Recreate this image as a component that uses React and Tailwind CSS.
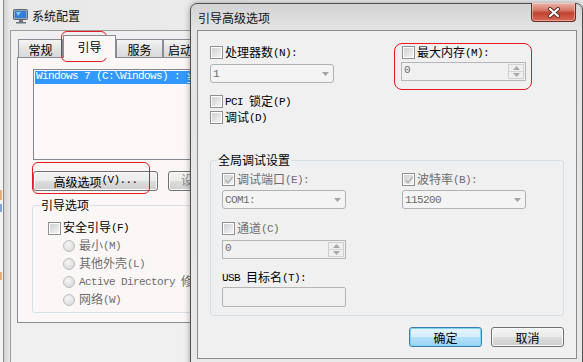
import React from "react";

function T({ s }) {
  const parts = s.match(/[\x00-\x7F]+|[^\x00-\x7F]+/g) || [];
  return (
    <>
      {parts.map((p, i) =>
        /^[\x00-\x7F]/.test(p) ? (
          <span key={i} className="relative top-[-1px] font-['Liberation_Mono',monospace] text-[11px] tracking-[-0.6px] whitespace-pre">
            {p}
          </span>
        ) : (
          <span key={i}>{p}</span>
        )
      )}
    </>
  );
}

function Check({ checked }) {
  return (
    <span className="relative flex h-[13px] w-[13px] shrink-0 items-center justify-center border border-[#8f8f8f] bg-white p-[1px]">
      <span className="h-full w-full bg-[linear-gradient(135deg,#cfd1d3,#f3f3f3)]" />
      {checked && (
        <svg className="absolute left-[1px] top-[1px]" width="10" height="10" viewBox="0 0 10 10">
          <path d="M1.5 5 L4 7.8 L8.7 1.8" fill="none" stroke="#b4b4b4" strokeWidth="1.6" />
        </svg>
      )}
    </span>
  );
}

function CheckRow({ label, checked, dim }) {
  return (
    <div className={"flex h-[13px] items-center gap-[2px] " + (dim ? "text-[#6d6d6d]" : "text-black")}>
      <Check checked={checked} />
      <span className="leading-[13px] whitespace-nowrap">
        <T s={label} />
      </span>
    </div>
  );
}

function Radio({ label }) {
  return (
    <div className="flex h-[18px] items-center gap-[4px] pl-[30px] text-[#6d6d6d]">
      <span className="h-[12px] w-[12px] shrink-0 rounded-full border border-[#bdbdbd] bg-[radial-gradient(circle_at_40%_35%,#f6f6f6,#d4d4d4)]" />
      <span className="whitespace-nowrap leading-[13px]">
        <T s={label} />
      </span>
    </div>
  );
}

function Arrow() {
  return (
    <svg width="7" height="4" viewBox="0 0 7 4">
      <path d="M0 0 H7 L3.5 4 Z" fill="#a3a3a3" />
    </svg>
  );
}

function Combo({ value }) {
  return (
    <div className="flex h-[19px] w-[124px] items-center justify-between rounded-[3px] border border-[#adb2b5] bg-[#f4f4f4] pl-[2px] pr-[4px] text-[#6d6d6d]">
      <span className="leading-[13px]">
        <T s={value} />
      </span>
      <Arrow />
    </div>
  );
}

function Spin({ value, wide }) {
  return (
    <div className={"flex h-[19px] border border-[#b3b7bb] bg-[#f0f0f0] " + (wide ? "w-[125px]" : "w-[124px]")}>
      <div className="flex flex-1 items-center pl-[2px] text-[#6d6d6d] leading-[13px]">
        <T s={value} />
      </div>
      <div className="my-[1px] mr-[1px] flex w-[16px] flex-col border border-[#d0d0d0] bg-[#efefef]">
        <div className="flex flex-1 items-center justify-center border-b border-[#d6d6d6]">
          <svg width="7" height="4" viewBox="0 0 7 4">
            <path d="M0 4 H7 L3.5 0 Z" fill="#a8a8a8" />
          </svg>
        </div>
        <div className="flex flex-1 items-center justify-center">
          <svg width="7" height="4" viewBox="0 0 7 4">
            <path d="M0 0 H7 L3.5 4 Z" fill="#a8a8a8" />
          </svg>
        </div>
      </div>
    </div>
  );
}

function Btn({ children, primary, w }) {
  return (
    <div
      className={
        "flex h-[20px] items-center justify-center rounded-[3px] border leading-[13px] text-black " +
        (primary
          ? "border-[#3c7fb1] bg-[linear-gradient(#e6f5fd_0%,#d4eefc_50%,#b4e2fb_50%,#9dd4f3_100%)] shadow-[inset_0_0_0_1px_#7fd3f7] "
          : "border-[#707070] bg-[linear-gradient(#f3f3f3_0%,#ebebeb_50%,#dddddd_50%,#cfcfcf_100%)] shadow-[inset_0_0_0_1px_#fbfbfb] ") +
        w
      }
    >
      {children}
    </div>
  );
}

function Tab({ label, w, selected, left }) {
  if (selected) {
    return (
      <div
        className={
          "relative z-10 -mb-[1px] flex h-[23px] items-center justify-center border border-b-0 border-[#898c95] bg-[#fcf7f7] pb-[1px] " + w
        }
      >
        {label}
      </div>
    );
  }
  return (
    <div
      className={
        "flex h-[18px] items-center border border-b-0 border-[#898c95] bg-[linear-gradient(#f4f4f4,#e4e4e4_50%,#d9d9d9)] pt-[1px] " +
        (left ? "justify-start pl-[4px] " : "justify-center ") +
        w
      }
    >
      {label}
    </div>
  );
}

export default function App() {
  return (
    <div className="relative h-[362px] w-[583px] overflow-hidden bg-[#ececec] font-['Noto_Sans_CJK_SC',sans-serif] text-[12px] leading-[13px] text-black">
      {/* desktop strip on the far left */}
      <div className="absolute left-0 top-0 flex h-full w-[4px] flex-col bg-[#f4f4f4]">
        <div className="mt-[190px] h-[10px] w-[2px] bg-[#e0b27a]" />
        <div className="mt-[4px] h-[8px] w-[2px] bg-[#7ea6dd]" />
        <div className="mt-[60px] h-[8px] w-[2px] bg-[#e0b27a]" />
      </div>

      {/* 系统配置 window */}
      <div className="absolute left-[3px] top-0 flex h-[370px] w-[260px] flex-col border-l border-[#8a8a8a] bg-[linear-gradient(90deg,#d2d2d2,#e8e8e8_6px,#ececec)]">
        <div className="flex h-[30px] shrink-0 items-center gap-[3px] pl-[9px] pt-[1px]">
          <svg width="16" height="16" viewBox="0 0 16 16">
            <rect x="0.5" y="1.5" width="14" height="10" rx="1" fill="#9aa3ad" stroke="#5d6770" />
            <rect x="2" y="3" width="11" height="7" fill="#2f7ed8" />
            <path d="M3 4 L8 4 L5 8 Z" fill="#8cc4f5" />
            <rect x="6" y="12" width="4" height="2" fill="#6b737b" />
            <rect x="3" y="14" width="10" height="1.5" fill="#6b737b" />
          </svg>
          <span className="text-[#111]">系统配置</span>
        </div>
        <div className="ml-[6px] flex-1 border-l border-t border-[#9c9c9c] bg-[#f0f0f0] pl-[6px] pt-[4px]">
          <div className="ml-[1px] flex h-[22px] items-end">
            <Tab label="常规" w="w-[45px]" />
            <Tab label="引导" w="w-[53px]" selected />
            <Tab label="服务" w="w-[47px]" />
            <Tab label="启动" w="w-[50px]" left />
          </div>
          <div className="h-[266px] w-[320px] border border-[#898c95] bg-[#fcf7f7] pl-[15px] pt-[11px]">
            <div className="h-[91px] w-[300px] border border-[#828790] bg-[#fdf8f8] pt-[1px] pl-[1px]">
              <div className="flex h-[13px] items-center whitespace-nowrap bg-[#3399ff] pl-[1px] text-white">
                <T s="Windows 7 (C:\Windows) : 当前操作系统" />
              </div>
            </div>
            <div className="mt-[11px] flex gap-[10px]">
              <Btn w="w-[125px]">
                <T s="高级选项(V)..." />
              </Btn>
              <Btn w="w-[100px]">
                <span className="pl-[4px] text-[#8a8a8a]">
                  <T s="设为默认值(D)" />
                </span>
              </Btn>
            </div>
            <div className="relative mt-[14px] h-[108px] w-[300px] -ml-[1px] rounded-[3px] border border-[#d5dfe5] pt-[13px]">
              <span className="absolute left-[7px] top-[-8px] bg-[#fcf7f7] px-[1px]">引导选项</span>
              <div className="flex h-[18px] items-center pl-[15px]">
                <CheckRow label="安全引导(F)" />
              </div>
              <Radio label="最小(M)" />
              <Radio label="其他外壳(L)" />
              <Radio label="Active Directory 修复(P)" />
              <Radio label="网络(W)" />
            </div>
          </div>
        </div>
      </div>

      {/* 引导高级选项 dialog */}
      <div className="absolute left-[190px] top-[3px] flex h-[370px] w-[393px] flex-col rounded-t-[7px] border border-[#4f4f4f] bg-[linear-gradient(#d3d3d3,#e4e4e4_26px,#e9e9e9)] shadow-[0_0_6px_rgba(0,0,0,0.35)]">
        <div className="flex h-[26px] shrink-0 items-start">
          <span className="ml-[7px] mt-[7px] text-[#111]">引导高级选项</span>
          <div className="ml-auto mr-[6px] -mt-[1px] flex h-[19px] w-[45px] items-center justify-center rounded-b-[4px] border border-t-0 border-[#6b2a22] bg-[linear-gradient(#e9b4a8,#d67a69_40%,#c2412f_55%,#d66a55)] shadow-[inset_0_0_0_1px_rgba(255,220,210,0.5)]">
            <svg width="14" height="11" viewBox="0 0 14 11">
              <path d="M3 2 L11 9 M11 2 L3 9" stroke="#5a2a24" strokeWidth="4" strokeLinecap="round" />
              <path d="M3 2 L11 9 M11 2 L3 9" stroke="#ffffff" strokeWidth="2.2" strokeLinecap="round" />
            </svg>
          </div>
        </div>
        <div className="ml-[6px] h-[329px] w-[380px] shrink-0 border border-[#8b8b8b] bg-[#f0f0f0]">
          <div className="flex pl-[12px] pt-[15px]">
            <div className="w-[191px]">
              <CheckRow label="处理器数(N):" />
              <div className="mt-[5px]">
                <Combo value="1" />
              </div>
              <div className="mt-[12px]">
                <CheckRow label="PCI 锁定(P)" />
              </div>
              <div className="mt-[3px]">
                <CheckRow label="调试(D)" />
              </div>
            </div>
            <div>
              <div className="pl-[1px]">
                <CheckRow label="最大内存(M):" />
              </div>
              <div className="mt-[3px]">
                <Spin value="0" wide />
              </div>
            </div>
          </div>

          <div className="relative ml-[12px] mt-[36px] h-[156px] w-[354px] rounded-[3px] border border-[#d5dfe5]">
            <span className="absolute left-[6px] top-[-8px] bg-[#f0f0f0] px-[1px]">全局调试设置</span>
            <div className="flex pl-[11px] pt-[12px]">
              <div className="w-[180px]">
                <CheckRow label="调试端口(E):" checked dim />
                <div className="mt-[4px]">
                  <Combo value="COM1:" />
                </div>
                <div className="mt-[13px]">
                  <CheckRow label="通道(C)" dim />
                </div>
                <div className="mt-[5px]">
                  <Spin value="0" />
                </div>
                <div className="mt-[11px] h-[13px] whitespace-nowrap leading-[13px]">
                  <T s="USB 目标名(T):" />
                </div>
                <div className="mt-[4px] h-[20px] w-[124px] rounded-[2px] border border-[#b5b5b5] bg-[#f0f0f0]" />
              </div>
              <div>
                <CheckRow label="波特率(B):" checked dim />
                <div className="mt-[4px]">
                  <Combo value="115200" />
                </div>
              </div>
            </div>
          </div>

          <div className="mt-[11px] flex justify-end gap-[9px] pr-[12px]">
            <Btn primary w="w-[73px]">确定</Btn>
            <Btn w="w-[73px]">取消</Btn>
          </div>
        </div>
      </div>

      {/* red annotation marks */}
      <div className="pointer-events-none absolute left-[61px] top-[31px] h-[31px] w-[46px] rounded-[6px] border border-[#e8191f]" />
      <div className="pointer-events-none absolute left-[32px] top-[162px] h-[32px] w-[118px] rounded-[6px] border border-[#e8191f]" />
      <div className="pointer-events-none absolute left-[394px] top-[43px] h-[47px] w-[138px] rounded-[8px] border border-[#e8191f]" />
    </div>
  );
}
